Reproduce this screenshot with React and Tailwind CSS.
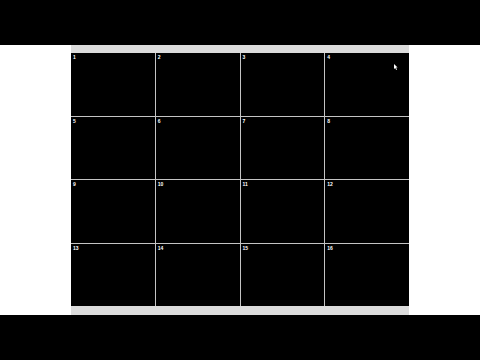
import React from "react";

export default function App() {
  const cells = Array.from({ length: 16 }, (_, i) => i + 1);
  return (
    <div className="w-[480px] h-[360px] flex flex-col bg-black antialiased" style={{ fontFamily: '"Liberation Sans", Arial, sans-serif' }}>
      <div className="h-[45px] bg-black" />
      <div className="h-[270px] bg-white flex justify-center">
        <div className="w-[338px] flex flex-col">
          <div className="h-[8px] bg-[#dcdcdc]" />
          <div className="flex-1 grid grid-cols-4 grid-rows-4 gap-px bg-[#c4c4c4]">
            {cells.map((n) => (
              <div key={n} className="bg-black relative">
                <span className="absolute left-[2px] top-[2px] text-[5px] leading-[5px] font-bold text-white">{n}</span>
                {n === 4 && (
                  <svg className="absolute left-[69px] top-[11px]" width="4" height="6" viewBox="0 0 4 6">
                    <path d="M0 0 L0 5 L1.2 4 L2.2 6 L3 5.6 L2 3.6 L3.6 3.6 Z" fill="#fff" />
                  </svg>
                )}
              </div>
            ))}
          </div>
          <div className="h-[9px] bg-[#dcdcdc]" />
        </div>
      </div>
      <div className="h-[45px] bg-black" />
    </div>
  );
}
